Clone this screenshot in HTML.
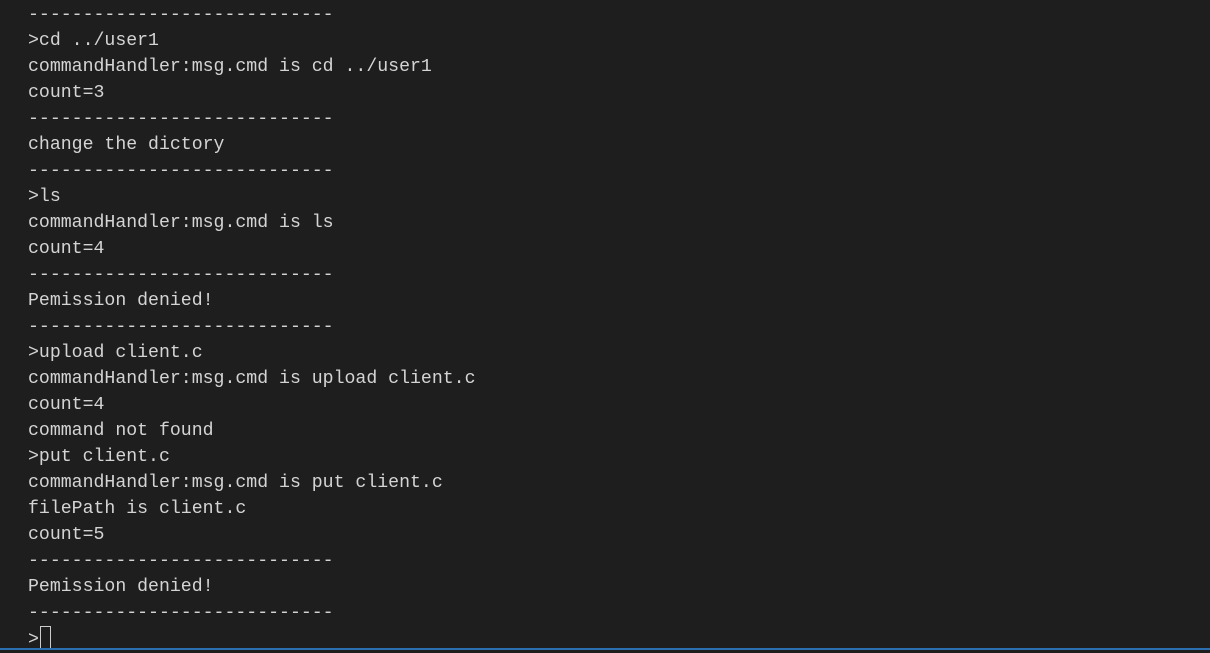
<html><head><style>
body{margin:0;background:#1e1e1e;width:1210px;height:650px;overflow:hidden;position:relative}
pre{margin:0;padding:2px 0 0 28px;font-family:"Liberation Mono",monospace;font-size:18.2px;line-height:26px;color:#d4d4d4}
.cur{display:inline-block;width:9px;height:22px;border:1px solid #cccccc;vertical-align:-6px;margin-left:1px}
.bar{position:absolute;left:0;right:0;bottom:0;height:2px;background:#2b6fb0}
</style></head><body><pre>----------------------------
>cd ../user1
commandHandler:msg.cmd is cd ../user1
count=3
----------------------------
change the dictory
----------------------------
>ls
commandHandler:msg.cmd is ls
count=4
----------------------------
Pemission denied!
----------------------------
>upload client.c
commandHandler:msg.cmd is upload client.c
count=4
command not found
>put client.c
commandHandler:msg.cmd is put client.c
filePath is client.c
count=5
----------------------------
Pemission denied!
----------------------------
><span class="cur"></span></pre><div class="bar"></div></body></html>
